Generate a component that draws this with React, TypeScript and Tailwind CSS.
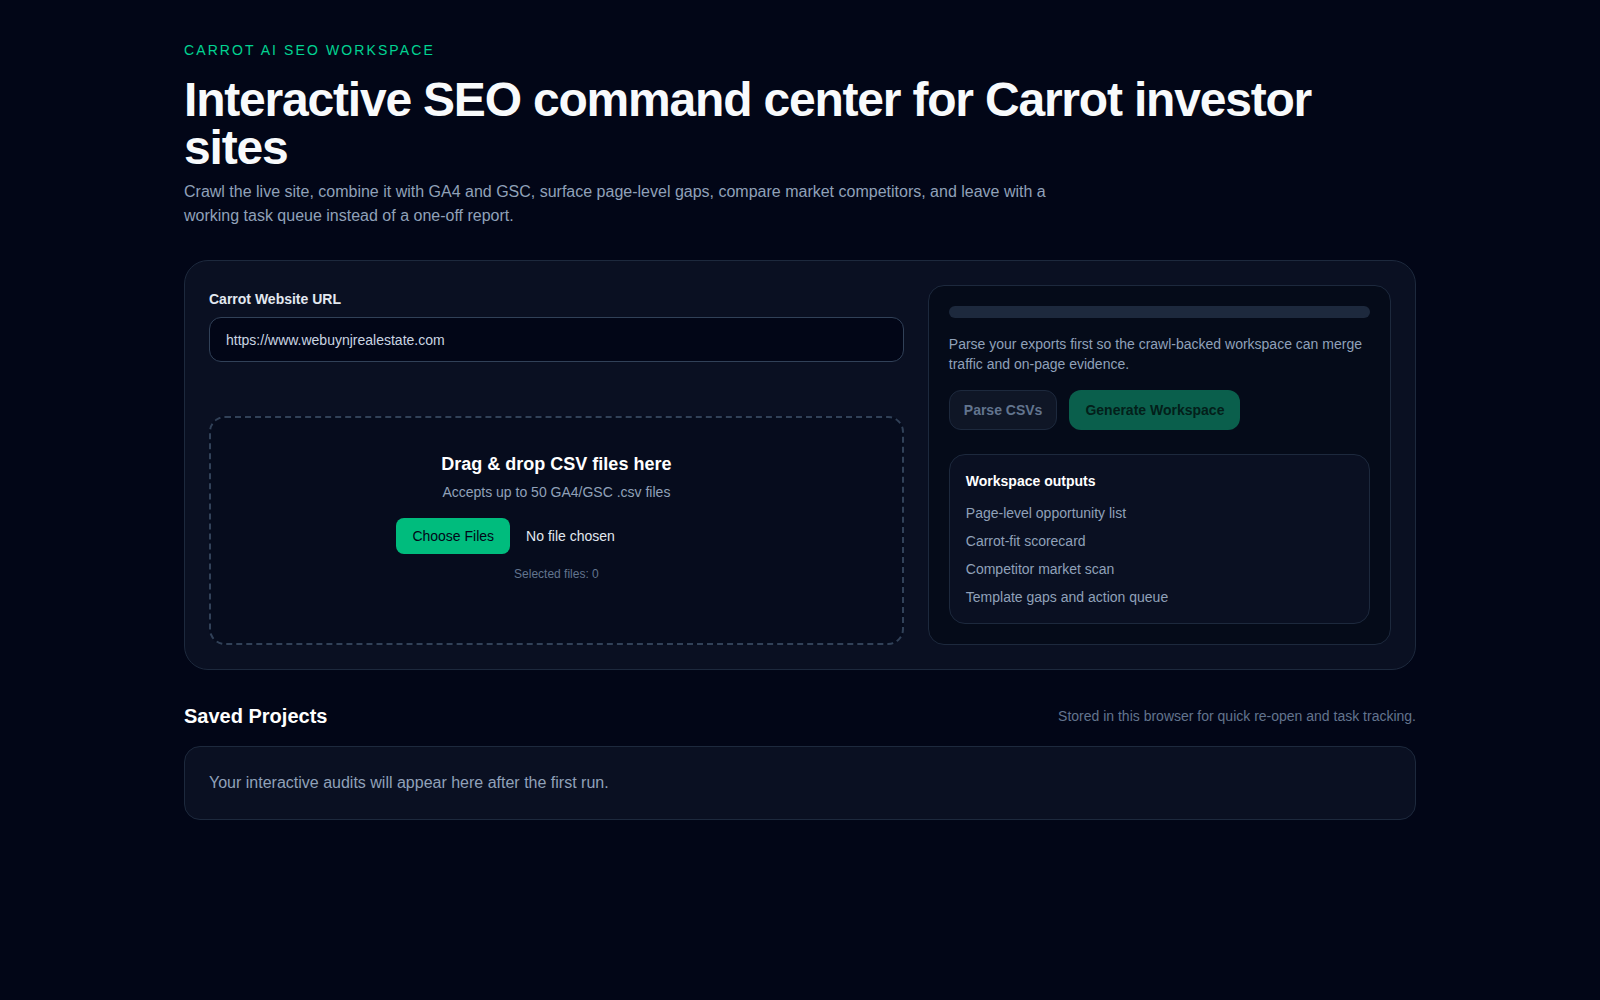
import React, { useState } from "react";

const outputs = [
  "Page-level opportunity list",
  "Carrot-fit scorecard",
  "Competitor market scan",
  "Template gaps and action queue",
];

const App = () => {
  const [url, setUrl] = useState("https://www.webuynjrealestate.com");
  const [files, setFiles] = useState<File[]>([]);

  return (
    <div
      className="min-h-screen bg-[#020617] text-slate-100"
      style={{ fontFamily: '"Segoe UI", "Liberation Sans", Arial, sans-serif' }}
    >
      <div className="mx-auto max-w-7xl px-6 pt-10 pb-16">
        {/* header */}
        <p className="text-sm uppercase tracking-[0.15em] text-emerald-400">Carrot AI SEO Workspace</p>
        <h1 className="mt-4 text-5xl leading-none font-semibold tracking-tight text-slate-50">
          Interactive SEO command center for Carrot investor sites
        </h1>
        <p className="mt-2 max-w-4xl text-base leading-6 text-slate-400">
          Crawl the live site, combine it with GA4 and GSC, surface page-level gaps, compare market competitors, and
          leave with a working task queue instead of a one-off report.
        </p>

        {/* setup panel */}
        <div className="mt-8 grid grid-cols-[1.5fr_1fr] gap-6 rounded-3xl border border-slate-800 bg-[#0a1022] p-6">
          <div className="flex flex-col">
            <label className="pt-1 text-sm leading-5 font-semibold text-slate-200">Carrot Website URL</label>
            <input
              value={url}
              onChange={(e) => setUrl(e.target.value)}
              className="mt-2 h-[45px] w-full rounded-xl border border-slate-700 bg-[#020617] px-4 text-sm text-slate-300 outline-none"
            />

            <label className="mt-[54px] flex flex-1 cursor-pointer flex-col items-center rounded-2xl border-2 border-dashed border-slate-700 bg-[#060c1d] px-8 pt-8 text-center">
              <span className="text-lg leading-7 font-semibold text-white">Drag &amp; drop CSV files here</span>
              <span className="mt-1 text-sm leading-5 text-slate-400">Accepts up to 50 GA4/GSC .csv files</span>
              <span className="mt-4 flex w-[320px] items-center gap-4">
                <span className="flex h-9 items-center rounded-lg bg-emerald-500 px-4 text-sm text-slate-950">
                  Choose Files
                </span>
                <span className="text-sm text-slate-200">
                  {files.length ? `${files.length} files` : "No file chosen"}
                </span>
              </span>
              <input
                type="file"
                multiple
                accept=".csv"
                className="hidden"
                onChange={(e) => setFiles(Array.from(e.target.files ?? []))}
              />
              <span className="mt-3 text-xs leading-4 text-slate-500">Selected files: {files.length}</span>
            </label>
          </div>

          <div className="rounded-2xl border border-slate-800 bg-[#050b19] p-5">
            <div className="h-3 w-full rounded-full bg-slate-800" />
            <p className="mt-4 text-sm leading-5 text-slate-400">
              Parse your exports first so the crawl-backed workspace can merge traffic and on-page evidence.
            </p>
            <div className="mt-4 flex gap-3">
              <button className="h-10 rounded-xl border border-slate-800 bg-[#0f1626] px-3.5 text-sm font-semibold text-slate-500">
                Parse CSVs
              </button>
              <button className="h-10 rounded-xl bg-[#0a5f4c] px-4 text-sm font-semibold text-[#03201a]">
                Generate Workspace
              </button>
            </div>

            <div className="mt-6 rounded-2xl border border-slate-800 bg-[#0a1022] p-4">
              <p className="text-sm leading-5 font-semibold text-white">Workspace outputs</p>
              <ul className="mt-3 space-y-2 text-sm leading-5 text-slate-400">
                {outputs.map((o) => (
                  <li key={o}>{o}</li>
                ))}
              </ul>
            </div>
          </div>
        </div>

        {/* saved projects */}
        <div className="mt-8 flex items-center justify-between">
          <h2 className="text-xl leading-7 font-semibold text-white">Saved Projects</h2>
          <p className="text-sm text-slate-500">Stored in this browser for quick re-open and task tracking.</p>
        </div>
        <div className="mt-4 rounded-2xl border border-slate-800 bg-[#0a1022] p-6">
          <p className="text-base leading-6 text-slate-400">Your interactive audits will appear here after the first run.</p>
        </div>
      </div>
    </div>
  );
};

export default App;
